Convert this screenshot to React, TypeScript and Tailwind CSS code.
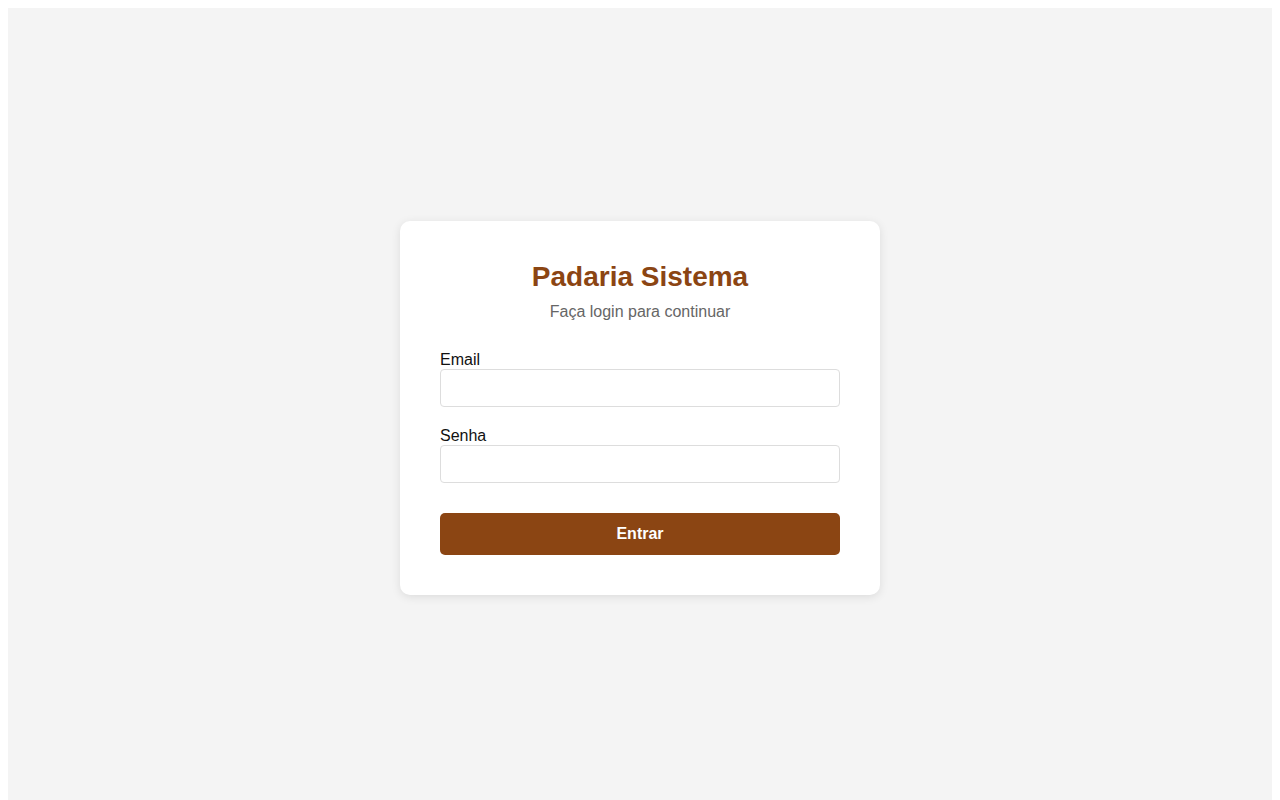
import React from 'react'

export default function App() {
  return (
    <div className="p-2 bg-white font-['Liberation_Sans',Arial,sans-serif]">
      <div className="h-screen bg-[#f4f4f4] flex items-center justify-center">
        {/* login card */}
        <div className="w-[480px] bg-white rounded-[10px] p-10 shadow-[0_2px_10px_rgba(0,0,0,0.1)]">
          <div className="text-center mb-[30px]">
            <h1 className="text-[28px] leading-[normal] font-bold text-[#8b4513] mb-[10px]">Padaria Sistema</h1>
            <p className="text-base leading-[normal] text-[#666]">Faça login para continuar</p>
          </div>
          <form onSubmit={(e) => e.preventDefault()}>
            <div className="mb-5">
              <label htmlFor="email" className="block text-base leading-[normal] text-[#111]">Email</label>
              <input id="email" type="email" className="block w-full h-[38px] px-[10px] border border-[#ddd] rounded-[4px] text-base outline-none" />
            </div>
            <div>
              <label htmlFor="senha" className="block text-base leading-[normal] text-[#111]">Senha</label>
              <input id="senha" type="password" className="block w-full h-[38px] px-[10px] border border-[#ddd] rounded-[4px] text-base outline-none" />
            </div>
            <button type="submit" className="mt-[30px] w-full h-[42px] bg-[#8b4513] text-white font-bold text-base rounded-[5px]">
              Entrar
            </button>
          </form>
        </div>
      </div>
    </div>
  )
}
